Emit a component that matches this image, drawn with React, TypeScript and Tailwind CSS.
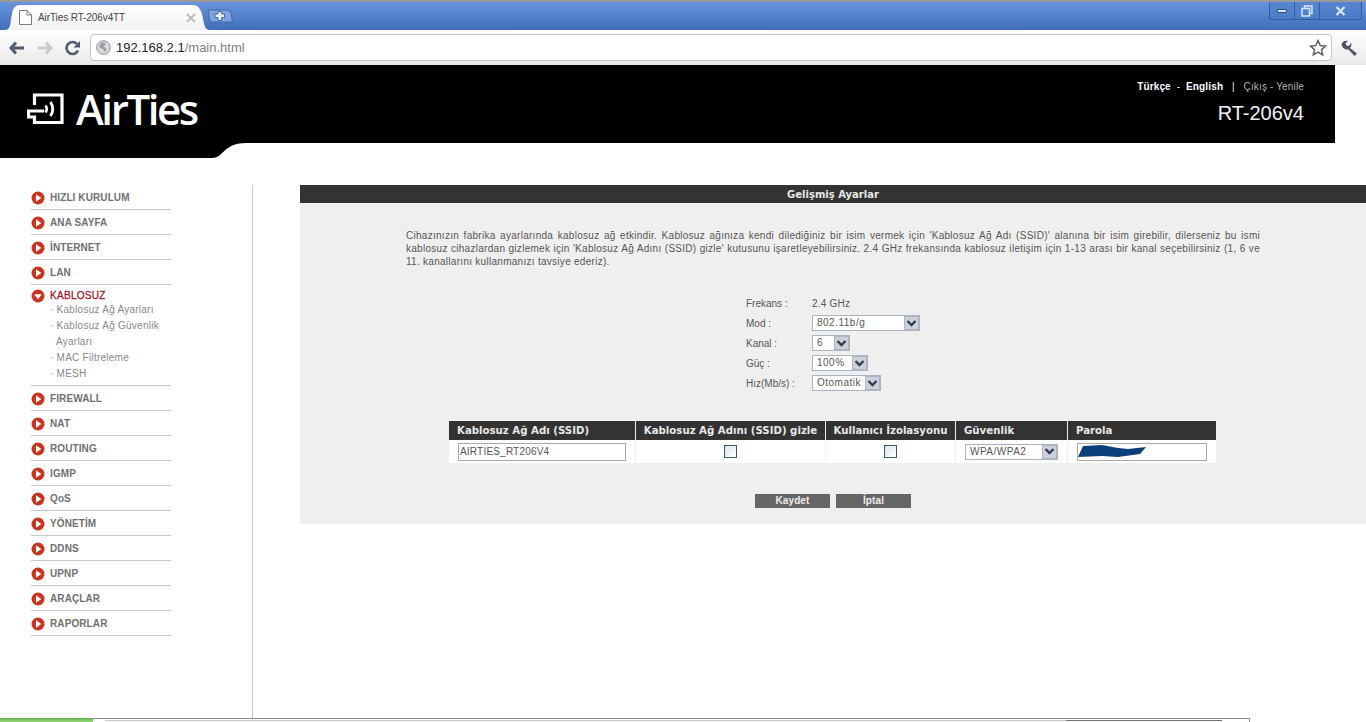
import React from "react";

const arial = "font-['Liberation_Sans',Arial,sans-serif]";

const NAV_TOP = ["HIZLI KURULUM", "ANA SAYFA", "İNTERNET", "LAN"];
const NAV_BOTTOM = ["FIREWALL", "NAT", "ROUTING", "IGMP", "QoS", "YÖNETİM", "DDNS", "UPNP", "ARAÇLAR", "RAPORLAR"];

function Bullet({ down = false }: { down?: boolean }) {
  return (
    <svg width="14" height="14" viewBox="0 0 14 14" className="shrink-0">
      <circle cx="7" cy="7" r="6.5" fill="#c8341f" />
      {down ? <path d="M3.2 5.2h7.6L7 10.2z" fill="#fff" /> : <path d="M5 3.2v7.6L10.4 7z" fill="#fff" />}
    </svg>
  );
}

function NavItem({ label }: { label: string }) {
  return (
    <div className="flex h-[25px] items-center gap-[5px] border-b border-[#c8c8c8] pt-[1px]">
      <Bullet />
      <span className={`${arial} text-[10px] font-bold tracking-[0.1px] text-[#707070]`}>{label}</span>
    </div>
  );
}

function Chevron() {
  return (
    <svg width="11" height="9" viewBox="0 0 11 9">
      <path d="M1.5 2 5.5 6 9.5 2" fill="none" stroke="#2c3d58" strokeWidth="2.4" />
    </svg>
  );
}

function SelectBox({ value, width, text = "text-[#555]" }: { value: string; width: string; text?: string }) {
  return (
    <div className={`flex h-[16px] items-stretch border border-[#a9b4c4] bg-white ${width}`}>
      <span className={`${arial} flex-1 pl-[4px] text-[10px] leading-[14px] tracking-[0.5px] ${text}`}>{value}</span>
      <span className="flex w-[15px] items-center justify-center border border-[#aeb4c0] bg-[#ccd0d8]">
        <Chevron />
      </span>
    </div>
  );
}

function FormRow({ label, children }: { label: string; children: React.ReactNode }) {
  return (
    <div className="flex h-[20px] items-center">
      <span className={`${arial} w-[66px] text-[10px] tracking-[0px] text-[#555]`}>{label}</span>
      {children}
    </div>
  );
}

function Check() {
  return <span className="block h-[13px] w-[13px] border border-[#3c5a66] bg-gradient-to-br from-[#dfe6ea] to-white" />;
}

const HEADS = ["Kablosuz Ağ Adı (SSID)", "Kablosuz Ağ Adını (SSID) gizle", "Kullanıcı İzolasyonu", "Güvenlik", "Parola"];

export default function App() {
  return (
    <div className={`${arial} flex h-[722px] w-[1366px] flex-col overflow-hidden bg-white`}>
      {/* Browser title + tabs */}
      <div className="h-[2px] bg-[#9a9a9a]" />
      <div className="flex h-[28px] items-end bg-gradient-to-b from-[#6794dd] to-[#3f6fb8] pl-[5px]">
        <div className="relative flex h-[25px] w-[205px] items-center pl-[14px] pr-[14px]">
          <svg className="absolute inset-0" width="205" height="25" viewBox="0 0 205 25">
            <defs>
              <linearGradient id="tab" x1="0" y1="0" x2="0" y2="1">
                <stop offset="0" stopColor="#ffffff" />
                <stop offset="1" stopColor="#f2f2f2" />
              </linearGradient>
            </defs>
            <path d="M0 25C6 25 5 18 7 9 8 3 10 0 16 0H187C193 0 195 3 197 9 199 18 199 25 205 25Z" fill="url(#tab)" />
          </svg>
          <svg className="relative shrink-0" width="13" height="15" viewBox="0 0 13 15">
            <path d="M.5.5H8L12.5 5V14.500H.5Z" fill="#fff" stroke="#777" />
            <path d="M8 .5V5H12.500" fill="none" stroke="#777" />
          </svg>
          <span className="relative ml-[6px] flex-1 text-[10px] tracking-[-0.1px] text-[#444]">AirTies RT-206v4TT</span>
          <svg className="relative" width="10" height="10" viewBox="0 0 10 10">
            <path d="M1 1 9 9M9 1 1 9" fill="none" stroke="#bdbdbd" strokeWidth="2" />
          </svg>
        </div>
        <svg width="26" height="14" viewBox="0 0 26 14" className="mb-[7px] ml-[-3px] shrink-0">
          <path d="M1 1H20Q23 1 24 4L25.500 13H5Q3 13 2.500 10Z" fill="#7ea4dd" stroke="#3f6ba8" />
          <path d="M11 2.500h3.500v2.500H17.500v3.500H14.500v3H11v-3H8V5H11z" fill="#e6eef9" stroke="#33598f" strokeWidth=".8" />
        </svg>
        <div className="mb-[10px] ml-auto mr-[4px] flex h-[18px] w-[93px] items-center rounded-b-[3px] border border-t-0 border-[#2f5f9f] bg-gradient-to-b from-[#5686d2] to-[#4b7cc6]">
          <span className="flex h-full w-[25px] items-center justify-center border-r border-[#2f5f9f]">
            <span className="block h-[4px] w-[10px] rounded-[1px] border border-[#2b4d7e] bg-[#dbe6f5]" />
          </span>
          <span className="flex h-full w-[25px] items-center justify-center border-r border-[#2f5f9f]">
            <svg width="12" height="12" viewBox="0 0 12 12">
              <path d="M3.500 3V1H11V8.500H9M1 3.500H8.500V11H1Z" fill="none" stroke="#dbe6f5" strokeWidth="1.500" />
            </svg>
          </span>
          <span className="flex flex-1 items-center justify-center">
            <svg width="11" height="10" viewBox="0 0 11 10">
              <path d="M1.500 1 9.500 9M9.500 1 1.500 9" fill="none" stroke="#dbe6f5" strokeWidth="2.200" />
            </svg>
          </span>
        </div>
      </div>

      {/* Toolbar */}
      <div className="flex h-[35px] items-center bg-gradient-to-b from-white to-[#e9e9e9] pl-[9px] pr-[8px]">
        <svg width="16" height="14" viewBox="0 0 16 14" className="shrink-0">
          <path d="M7 1.500 2 7l5 5.500M2.500 7H15" fill="none" stroke="#4f5b70" strokeWidth="3" />
        </svg>
        <svg width="16" height="14" viewBox="0 0 16 14" className="ml-[12px] shrink-0">
          <path d="M9 1.500 14 7l-5 5.500M13.500 7H1" fill="none" stroke="#c8ccd2" strokeWidth="3" />
        </svg>
        <svg width="16" height="16" viewBox="0 0 16 16" className="ml-[12px] shrink-0">
          <path d="M13 10.500A6 6 0 1 1 12 4" fill="none" stroke="#4f5b70" strokeWidth="2.600" />
          <path d="M15 1v6.500H8.500z" fill="#4f5b70" />
        </svg>
        <div className="ml-[9px] flex h-[27px] w-[1243px] items-center rounded-[4px] border border-[#c4c4c4] bg-white pl-[5px] pr-[4px]">
          <svg width="15" height="15" viewBox="0 0 15 15" className="shrink-0">
            <circle cx="7.500" cy="7.500" r="6.800" fill="#d8dadd" stroke="#8a8d92" />
            <path d="M5 3c2-1 4 0 5 1L8 6 9 8l2 1-2 3-2-3-3-1-1-2z" fill="#9a9da2" />
          </svg>
          <span className="ml-[5px] flex-1 text-[13px] text-[#222]">
            192.168.2.1<span className="text-[#808080]">/main.html</span>
          </span>
          <svg width="18" height="18" viewBox="0 0 18 18" className="shrink-0">
            <path d="M9 1.500 11.200 6.500 16.500 7 12.500 10.600 13.700 16 9 13.200 4.300 16 5.500 10.600 1.500 7 6.800 6.500Z" fill="#fff" stroke="#5e636b" strokeWidth="1.500" />
          </svg>
        </div>
        <svg width="18" height="18" viewBox="0 0 18 18" className="ml-[8px] shrink-0">
          <path d="M1.500 5.500C2 2.500 5 1 8 2L5.500 4.500 7 7 9.500 6.500 11 3.500C12 6 11 8 10 9L17 14.500 14.500 17 8.500 10.500C5.500 11 2 9 1.500 5.500Z" fill="#4f5662" />
        </svg>
      </div>

      {/* Page header */}
      <header className="flex h-[78px] w-[1335px] shrink-0 items-stretch justify-between bg-black pl-[27px] pr-[31px]">
        <div className="flex items-center pt-[10px]">
          <svg width="37" height="32" viewBox="0 0 37 32" className="shrink-0">
            <path d="M7.500 12V2H35V29.500H7.500V24H1.500V18H17" fill="none" stroke="#fff" strokeWidth="3.200" />
            <path d="M18.500 12.500q2.500 3.500 0 7" fill="none" stroke="#fff" strokeWidth="2.600" />
            <path d="M23.500 9q4.500 7 0 14" fill="none" stroke="#fff" strokeWidth="2.800" />
          </svg>
          <span className="ml-[12px] font-['Open_Sans',sans-serif] text-[42px] font-semibold leading-none tracking-[-2.400px] text-white">AirTies</span>
        </div>
        <div className="flex flex-col items-end pt-[16px]">
          <div className="text-[10px] leading-[12px] tracking-[0.15px] text-[#eee] whitespace-pre">
            <b className="text-white">Türkçe</b>
            {"  -  "}
            <b className="text-white">English</b>
            {"   |   "}
            <span className="text-[#b4b4b4]">Çıkış - Yenile</span>
          </div>
          <div className="mt-[7px] text-[20px] leading-[26px] text-[#f4f4f4]">RT-206v4</div>
        </div>
      </header>
      <svg width="250" height="15" viewBox="0 0 250 15" className="block shrink-0">
        <path d="M0 0H250C238 0 234 1 228 5 221 10 219 15 212 15H0Z" fill="#000" />
      </svg>

      {/* Body */}
      <div className="flex min-h-0 flex-1 pt-[27px]">
        <aside className="w-[253px] shrink-0 border-r border-[#c9c9c9] pl-[31px]">
          <nav className="w-[140px]">
            {NAV_TOP.map((l) => (
              <NavItem key={l} label={l} />
            ))}
            <div className="border-b border-[#c8c8c8] pb-[3px] pt-[5px]">
              <div className="flex h-[11px] items-center gap-[5px]">
                <Bullet down />
                <span className="text-[10px] font-normal tracking-[0.3px] text-[#a01830] [-webkit-text-stroke:0.3px_#a01830]">KABLOSUZ</span>
              </div>
              <ul className="mt-[1px] pl-[19px] text-[10px] leading-[16px] tracking-[0.25px] text-[#888]">
                <li>· Kablosuz Ağ Ayarları</li>
                <li>· Kablosuz Ağ Güvenlik</li>
                <li className="pl-[6px]">Ayarları</li>
                <li>· MAC Filtreleme</li>
                <li>· MESH</li>
              </ul>
            </div>
            {NAV_BOTTOM.map((l) => (
              <NavItem key={l} label={l} />
            ))}
          </nav>
        </aside>

        <main className="ml-[47px] flex-1">
          <div className="h-[339px] bg-[#efefef]">
            <h1 className="flex h-[18px] items-center justify-center bg-[#333] font-['DejaVu_Sans',sans-serif] text-[10px] font-bold text-[#e8e8e8]">
              Gelişmiş Ayarlar
            </h1>
            <p className="ml-[106px] mt-[26px] w-[854px] text-justify text-[10px] leading-[13px] tracking-[0.28px] text-[#555]">
              Cihazınızın fabrika ayarlarında kablosuz ağ etkindir. Kablosuz ağınıza kendi dilediğiniz bir isim vermek için 'Kablosuz Ağ Adı (SSID)' alanına bir isim girebilir, dilerseniz bu ismi kablosuz cihazlardan gizlemek için 'Kablosuz Ağ Adını (SSID) gizle' kutusunu işaretleyebilirsiniz. 2.4 GHz frekansında kablosuz iletişim için 1-13 arası bir kanal seçebilirsiniz (1, 6 ve 11. kanallarını kullanmanızı tavsiye ederiz).
            </p>
            <div className="ml-[446px] mt-[25px]">
              <FormRow label="Frekans :">
                <span className="text-[10px] tracking-[0.2px] text-[#555]">2.4 GHz</span>
              </FormRow>
              <FormRow label="Mod :"><SelectBox value="802.11b/g" width="w-[108px]" /></FormRow>
              <FormRow label="Kanal :"><SelectBox value="6" width="w-[38px]" /></FormRow>
              <FormRow label="Güç :"><SelectBox value="100%" width="w-[56px]" /></FormRow>
              <FormRow label="Hız(Mb/s) :"><SelectBox value="Otomatik" width="w-[69px]" /></FormRow>
            </div>

            <div className="ml-[149px] mt-[28px] grid w-[767px] grid-cols-[186px_190px_130px_112px_149px] font-['DejaVu_Sans',sans-serif]">
              {HEADS.map((h, i) => (
                <div
                  key={h}
                  className={`flex h-[19px] items-center whitespace-nowrap bg-[#333] text-[10.200px] font-bold text-[#e8e8e8] ${i > 0 ? "border-l border-[#efefef]" : ""} ${i === 1 || i === 2 ? "justify-center" : "pl-[8px]"}`}
                >
                  {h}
                </div>
              ))}
              <div className="flex h-[23px] items-center bg-white pl-[9px]">
                <span className={`${arial} block h-[18px] w-[168px] border border-[#a8a8a8] pl-[1px] text-[10px] leading-[16px] tracking-[0.2px] text-[#555]`}>AIRTIES_RT206V4</span>
              </div>
              <div className="flex items-center justify-center border-l border-[#efefef] bg-white"><Check /></div>
              <div className="flex items-center justify-center border-l border-[#efefef] bg-white"><Check /></div>
              <div className="flex items-center border-l border-[#efefef] bg-white pl-[9px]">
                <SelectBox value="WPA/WPA2" width="w-[93px]" text="text-[#555]" />
              </div>
              <div className="flex items-center border-l border-[#efefef] bg-white pl-[9px]">
                <div className="relative h-[18px] w-[130px] border border-[#a8a8a8]">
                  <svg width="70" height="12" viewBox="0 0 70 12" className="absolute left-[0px] top-[1px]">
                    <path d="M5 1 24 0 40 3 50 4 68 2 62 9 40 12 24 11 0 12Z" fill="#0b3f7c" />
                  </svg>
                </div>
              </div>
            </div>

            <div className="ml-[455px] mt-[31px] flex gap-[6px]">
              <button className="h-[14px] w-[75px] bg-[#666] text-[10px] font-bold leading-[14px] tracking-[0.1px] text-[#eee]">Kaydet</button>
              <button className="h-[14px] w-[75px] bg-[#666] text-[10px] font-bold leading-[14px] tracking-[0.1px] text-[#eee]">İptal</button>
            </div>
          </div>
        </main>
      </div>

      {/* Cut-off taskbar edge */}
      <div className="flex h-[4px] shrink-0">
        <div className="w-[93px] bg-gradient-to-b from-[#5fae4c] to-[#9be07f]" />
        <div className="flex w-[1157px] border-t border-r border-[#8a8a8a] bg-white pl-[12px] pt-[1px]">
          <div className="h-[1px] w-[961px] bg-[#c4c4c4]" />
          <div className="h-[1px] w-[156px] bg-[#707070]" />
        </div>
      </div>
    </div>
  );
}
